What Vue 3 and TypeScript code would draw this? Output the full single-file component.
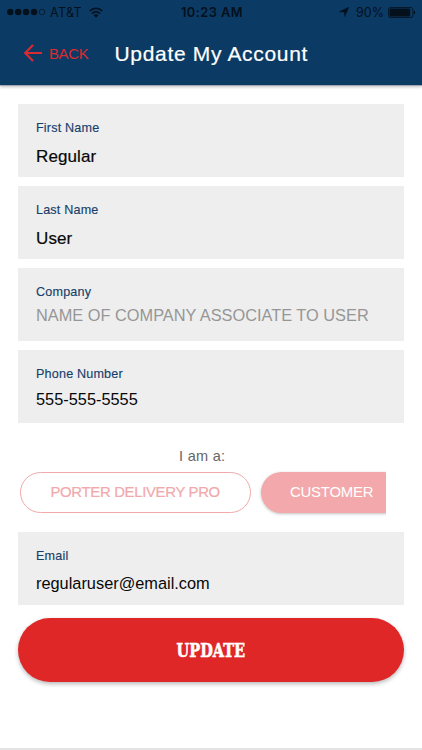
<script setup lang="ts">
interface Field {
  id: string
  label: string
  value: string
  placeholder?: boolean
}

const fields: Field[] = [
  { id: 'first', label: 'First Name', value: 'Regular' },
  { id: 'last', label: 'Last Name', value: 'User' },
  { id: 'company', label: 'Company', value: 'NAME OF COMPANY ASSOCIATE TO USER', placeholder: true },
  { id: 'phone', label: 'Phone Number', value: '555-555-5555' },
]
</script>

<template>
  <div class="screen">
    <header class="header">
      <div class="status">
        <div class="carrier">
          <svg class="dots" width="39" height="8" viewBox="0 0 39 8">
            <circle cx="3.3" cy="4" r="3.2" /><circle cx="11.2" cy="4" r="3.2" />
            <circle cx="19.1" cy="4" r="3.2" /><circle cx="27" cy="4" r="3.2" />
            <circle cx="35" cy="4" r="2.8" fill="none" stroke="#04101c" stroke-width=".7" />
          </svg>
          <span class="network">AT&amp;T</span>
          <svg class="wifi" width="14" height="11" viewBox="0 0 14 11">
            <path d="M.7 4C4.3.3 9.7.3 13.3 4M2.9 6.5c2.4-2.3 5.8-2.3 8.2 0" fill="none" stroke="#04101c" stroke-width="1.7" />
            <path d="M4.5 8.1c1.5-1.3 3.5-1.3 5 0L7 10.7z" />
          </svg>
        </div>
        <span class="time">10:23 AM</span>
        <div class="power">
          <svg class="location" width="10" height="10" viewBox="0 0 10 10"><path d="M9.8.2 5.8 9.6 5.2 5 .2 4.8z" stroke="#04101c" stroke-width=".4" /></svg>
          <span class="percent">90%</span>
          <svg class="battery" width="28" height="11" viewBox="0 0 28 11">
            <rect x=".5" y=".5" width="24.4" height="10" rx="2" fill="none" stroke="#04101c" stroke-width=".8" />
            <rect x="1.5" y="1.4" width="20.7" height="8.2" rx="1" />
            <path d="M25.8 3.5c2 .8 2 3.2 0 4z" />
          </svg>
        </div>
      </div>
      <div class="nav">
        <svg class="arrow" width="19" height="18" viewBox="0 0 19 18">
          <path d="M18 9H1.5M9 1 1.2 9 9 17" fill="none" stroke="#dc2a31" stroke-width="2" />
        </svg>
        <span class="back">BACK</span>
        <h1 class="title">Update My Account</h1>
      </div>
    </header>

    <main class="form">
      <section v-for="f in fields" :key="f.id" class="field" :class="f.id">
        <div class="label"><span>{{ f.label }}</span></div>
        <div class="value" :class="{ placeholder: f.placeholder }"><span>{{ f.value }}</span></div>
      </section>

      <div class="prompt"><span>I am a:</span></div>
      <div class="roles">
        <button class="role outline"><span>PORTER DELIVERY PRO</span></button>
        <button class="role filled"><span>CUSTOMER</span></button>
      </div>

      <section class="field email">
        <div class="label"><span>Email</span></div>
        <div class="value"><span>regularuser@email.com</span></div>
      </section>

      <button class="update"><span>UPDATE</span></button>
    </main>
    <footer class="bottom"></footer>
  </div>
</template>

<style>
body {
  background: #fff;
}
</style>

<style scoped>
.screen {
  width: 422px;
  height: 750px;
  display: flex;
  flex-direction: column;
  overflow: hidden;
  background: #fff;
  font-family: "Liberation Sans", Arial, sans-serif;
}
button {
  font: inherit;
  border: 0;
  margin: 0;
  padding: 0;
}
.header {
  height: 86px;
  flex: none;
  background: #0b3b64;
  border-bottom: 1px solid #a2a9b5;
  box-sizing: border-box;
  box-shadow: 0 1px 3px rgba(0, 0, 0, .25);
}
.status {
  height: 24px;
  display: grid;
  grid-template-columns: 1fr auto 1fr;
  align-items: center;
  padding: 0 6px 0 7px;
  box-sizing: border-box;
  font-family: Inter, sans-serif;
  font-size: 12.5px;
  color: #04101c;
  fill: #04101c;
}
.carrier,
.power {
  display: flex;
  align-items: center;
}
.power {
  justify-content: flex-end;
}
.network {
  margin-left: 4px;
  letter-spacing: .35px;
}
.wifi {
  margin-left: 7px;
}
.time {
  font-weight: 600;
  font-size: 12.8px;
  letter-spacing: .45px;
  padding-left: 1px;
}
.percent {
  margin: 0 4px 0 7px;
}
.nav {
  height: 58px;
  display: flex;
  align-items: center;
  padding-left: 24px;
}
.arrow {
  margin-right: 6px;
}
.back {
  width: 65.5px;
  font-size: 15px;
  letter-spacing: -.4px;
  color: #dc2a31;
}
.title {
  margin: 2px 0 0;
  font-size: 21px;
  line-height: 24px;
  font-weight: 400;
  letter-spacing: .67px;
  color: #fff;
  white-space: nowrap;
  -webkit-text-stroke: .2px #fff;
}
.form {
  flex: 1;
  display: flex;
  flex-direction: column;
  padding: 18px 18px 0;
}
.field {
  height: 73px;
  flex: none;
  box-sizing: border-box;
  padding: 16px 18px 0;
  margin-bottom: 9px;
  background: #eee;
}
.label {
  font-size: 12.6px;
  line-height: 16px;
  letter-spacing: .18px;
  color: #183f6b;
  -webkit-text-stroke: .15px #183f6b;
}
.value {
  margin-top: 11px;
  font-size: 17px;
  line-height: 20px;
  letter-spacing: .1px;
  color: #080808;
  white-space: nowrap;
  -webkit-text-stroke: .2px #080808;
}
.company .value,
.phone .value,
.email .value {
  font-size: 16.35px;
  letter-spacing: 0;
  -webkit-text-stroke: 0;
}
.company .value {
  margin-top: 5px;
}
.phone .value {
  margin-top: 7px;
}
.email .value {
  margin-top: 9px;
}
.value.placeholder {
  color: #969696;
}
.prompt {
  margin-top: 15px;
  padding-left: 161px;
  font-size: 14.5px;
  line-height: 18px;
  letter-spacing: .3px;
  color: #666;
}
.roles {
  display: flex;
  gap: 10px;
  height: 67px;
  width: 368px;
  padding: 7px 0 0 2px;
  box-sizing: border-box;
  overflow: hidden;
}
.role {
  flex: none;
  height: 41px;
  border-radius: 21px;
  box-sizing: border-box;
  padding-bottom: 1px;
  font-size: 14.9px;
  letter-spacing: -.32px;
  white-space: nowrap;
  text-align: left;
}
.outline {
  width: 231px;
  padding-left: 29.5px;
  border: 1.4px solid #f2a9ab;
  background: #fff;
  color: #f2a9ab;
  -webkit-text-stroke: .2px #f2a9ab;
}
.filled {
  width: 143px;
  padding-left: 29px;
  background: #f3a9ab;
  color: #fff;
  letter-spacing: -.2px;
  box-shadow: 0 1px 3px rgba(0, 0, 0, .25);
}
.field.email {
  margin-bottom: 13px;
}
.update {
  height: 64px;
  flex: none;
  border-radius: 32px;
  background: #e02728;
  color: #fff;
  font-family: "DejaVu Serif", serif;
  font-size: 19px;
  font-weight: 700;
  box-shadow: 0 2px 4px rgba(0, 0, 0, .28);
}
.update span {
  display: inline-block;
  transform: scaleX(.765);
  -webkit-text-stroke: .6px #fff;
}
.bottom {
  height: 2px;
  flex: none;
  background: #e3e3e3;
}
</style>
